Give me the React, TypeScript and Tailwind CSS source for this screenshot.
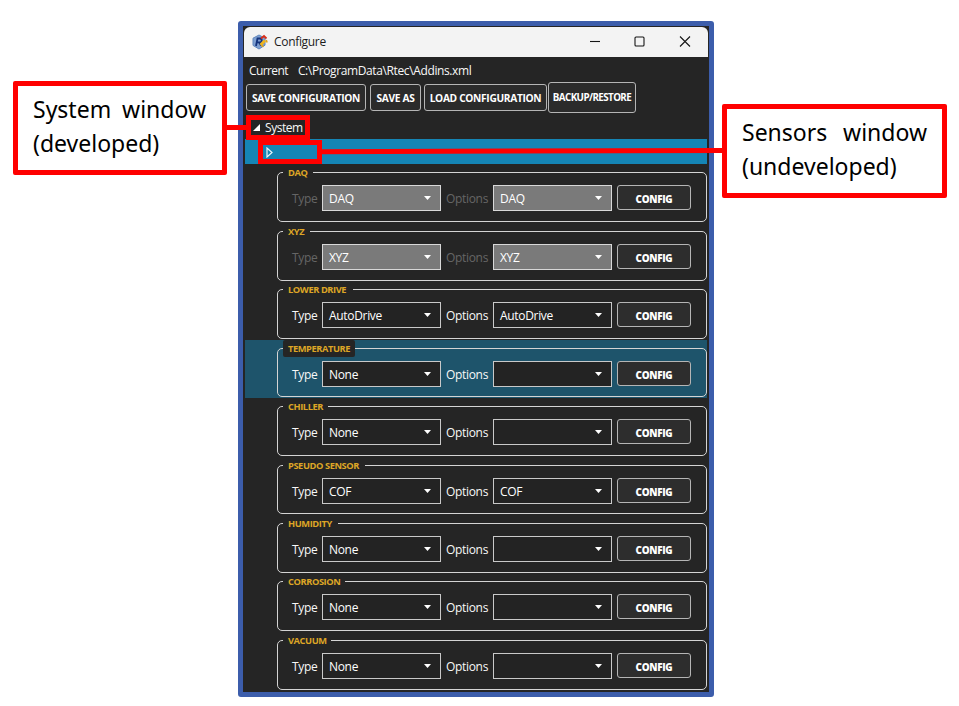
import { clsx } from "clsx";

interface Sensor {
  name: string;
  type: string;
  option: string;
  locked?: boolean;
  highlighted?: boolean;
  legendClass: string;
}

const sensors: Sensor[] = [
  { name: "DAQ", type: "DAQ", option: "DAQ", locked: true, legendClass: "w-[30px]" },
  { name: "XYZ", type: "XYZ", option: "XYZ", locked: true, legendClass: "w-[27px]" },
  { name: "LOWER DRIVE", type: "AutoDrive", option: "AutoDrive", legendClass: "w-[70px]" },
  { name: "TEMPERATURE", type: "None", option: "", highlighted: true, legendClass: "w-[72px]" },
  { name: "CHILLER", type: "None", option: "", legendClass: "w-[45px]" },
  { name: "PSEUDO SENSOR", type: "COF", option: "COF", legendClass: "w-[82px]" },
  { name: "HUMIDITY", type: "None", option: "", legendClass: "w-[55px]" },
  { name: "CORROSION", type: "None", option: "", legendClass: "w-[62px]" },
  { name: "VACUUM", type: "None", option: "", legendClass: "w-[48px]" },
];

function AppIcon() {
  return (
    <svg className="h-4 w-4 shrink-0" viewBox="0 0 16 16" fill="none">
      <path d="M7 1l6 3.2v7L7 15l-6-3.6V4.2z" fill="#7f9fd0" stroke="#5f86bd" />
      <path d="M4 12l1.5-7.5h2.3a1.9 1.9 0 010 3.8H5M7.2 8.5l1.8 3" stroke="#14337c" strokeWidth="1.8" />
      <path d="M8.5 11l4.5-4.5" stroke="#f0b51c" strokeWidth="2.6" />
      <path d="M9 4.5l3-2.5 2.5 2.5" stroke="#d92c17" strokeWidth="1.8" />
      <path d="M14.3 6l.8 2.5M9.5 11.5l2 1" stroke="#e1a414" strokeWidth="1.5" />
    </svg>
  );
}

function Combo({ value, locked }: { value: string; locked?: boolean }) {
  return (
    <div
      className={clsx(
        "flex h-[26px] w-[119px] items-center justify-between border pl-1.5 pr-[9px] text-white",
        locked ? "border-[#d8d8d8] bg-[#7a7a7a]" : "border-[#c9c9c9] bg-[#232323]",
      )}
    >
      <span className="pt-px">{value}</span>
      <svg className="h-1 w-[7px]" viewBox="0 0 7 4" fill="#fff">
        <path d="M0 0h7L3.5 4z" />
      </svg>
    </div>
  );
}

function SensorRow({ sensor }: { sensor: Sensor }) {
  const labelClass = sensor.locked ? "text-[#656565]" : "text-[#f8f8f8]";
  return (
    <div className={clsx("h-[58.45px] pl-8", sensor.highlighted && "bg-[#1e546b]")}>
      <fieldset className="h-[57.7px] w-[430px] rounded-[5px] border border-[#d4d4d4] pl-[5px]">
        <legend
          className={clsx(
            "h-[17px] whitespace-nowrap rounded-xs pl-[5px] text-[9.3px] font-bold leading-[17px] tracking-[-0.42px] text-[#dda526]",
            sensor.legendClass,
            sensor.highlighted && "bg-[#252525]",
          )}
        >
          {sensor.name}
        </legend>
        <div className="flex pl-[9px] pt-1 leading-[27px]">
          <span className={clsx("w-[30px]", labelClass)}>Type</span>
          <Combo value={sensor.type} locked={sensor.locked} />
          <span className={clsx("w-[52px] pl-[5px]", labelClass)}>Options</span>
          <Combo value={sensor.option} locked={sensor.locked} />
          <button className="ml-[5px] h-[25px] w-[74px] rounded-[3px] border border-[#b5b5b5] bg-[#2d2d2d] pt-[2px] text-[9.9px] font-extrabold leading-[22px] tracking-[-0.3px] text-white">
            CONFIG
          </button>
        </div>
      </fieldset>
    </div>
  );
}

function ConfigureWindow() {
  return (
    <div className="ml-[238px] mt-[21px] h-[676px] w-[476px] rounded-[3px] border-[5px] border-[#3c5dab] bg-[#252525] px-px pt-px font-['Open_Sans','Noto_Sans',sans-serif] text-[12px] tracking-[-0.32px]">
      <div className="flex h-[30px] w-[464px] items-center rounded-t-md bg-[#f3f3f3] pl-2 text-[#1b1b1b]">
        <AppIcon />
        <span className="ml-1.5">Configure</span>
        <svg className="ml-auto mr-4 h-3 w-[104px]" viewBox="0 0 104 12" fill="none" stroke="#151515" strokeWidth="1.1">
          <path d="M2 5.5h10" />
          <rect x="47" y="1" width="9" height="9" rx="1" />
          <path d="M92 .5l10 10M102 .5L92 10.5" />
        </svg>
      </div>
      <div className="flex h-[25px] items-center gap-[10px] pl-[5px] pt-[3px] tracking-[-0.38px] text-[#f8f8f8]">
        <span className="tracking-[-0.6px]">Current</span>
        <span>C:\ProgramData\Rtec\Addins.xml</span>
      </div>
      <div className="flex h-[31px] items-center pl-0.5 text-[10.2px] font-bold tracking-[-0.32px] text-white">
        <button className="h-[27px] w-[120px] rounded-[3px] border border-[#b5b5b5] bg-[#2b2b2b] pt-0.5">SAVE CONFIGURATION</button>
        <button className="ml-1 h-[27px] w-[51px] rounded-[3px] border border-[#b5b5b5] bg-[#2b2b2b] pt-0.5">SAVE AS</button>
        <button className="ml-[3px] h-[27px] w-[123px] rounded-[3px] border border-[#b5b5b5] bg-[#2b2b2b] pt-0.5">LOAD CONFIGURATION</button>
        <button className="ml-px h-[31px] w-[88px] rounded-[3px] border border-[#b5b5b5] bg-[#2b2b2b] pt-0.5 text-[9.8px] tracking-[-0.58px]">BACKUP/RESTORE</button>
      </div>
      <div className="flex h-[27px] items-end pl-0.5">
        <div className="flex h-[25px] w-16 items-center border-[5px] border-[#ff0000] text-[#f8f8f8]">
          <svg className="ml-0.5 mr-[5px] h-[7px] w-[7px]" viewBox="0 0 7 7" fill="#fff">
            <path d="M7 0v7H0z" />
          </svg>
          <span className="tracking-[-0.45px]">System</span>
        </div>
      </div>
      <div className="-mt-px ml-px h-[25px] w-[462px] bg-[#1585b5] pl-[13px] pt-px">
        <div className="flex h-[24px] w-16 items-center border-[5px] border-[#ff0000]">
          <svg className="ml-[3px] h-[11px] w-[7px]" viewBox="0 0 7 11" fill="none" stroke="#e9f5fa" strokeWidth="1.2">
            <path d="M1 1v9l5-4.5z" />
          </svg>
        </div>
      </div>
      <div className="ml-px mt-[0.4px] w-[462px]">
        {sensors.map((sensor) => (
          <SensorRow key={sensor.name} sensor={sensor} />
        ))}
      </div>
    </div>
  );
}

export default function App() {
  return (
    <main className="relative flex h-[706px] w-[959px] items-start overflow-hidden bg-white">
      <ConfigureWindow />

      {/* Callouts and their leader lines sit on top of the window */}
      <svg className="absolute inset-0" width="959" height="706" stroke="#ff0000" strokeWidth="5">
        <path d="M226 127.5h22M320 151.7L724 150.4" />
      </svg>
      <div className="absolute left-[13px] top-[81px] h-[94px] w-[214px] rounded-xs border-[5px] border-[#ff0000] bg-white pl-[15px] pr-4 pt-[6px] font-['Noto_Sans',sans-serif] text-[23px] leading-[34px] text-black">
        <div className="flex justify-between">
          <span>System</span>
          <span>window</span>
        </div>
        <div>(developed)</div>
      </div>
      <div className="absolute left-[722px] top-[104px] h-[94px] w-[225px] rounded-xs border-[5px] border-[#ff0000] bg-white px-[15px] pt-[6px] font-['Noto_Sans',sans-serif] text-[23px] leading-[34px] text-black">
        <div className="flex justify-between">
          <span>Sensors</span>
          <span>window</span>
        </div>
        <div>(undeveloped)</div>
      </div>
    </main>
  );
}
